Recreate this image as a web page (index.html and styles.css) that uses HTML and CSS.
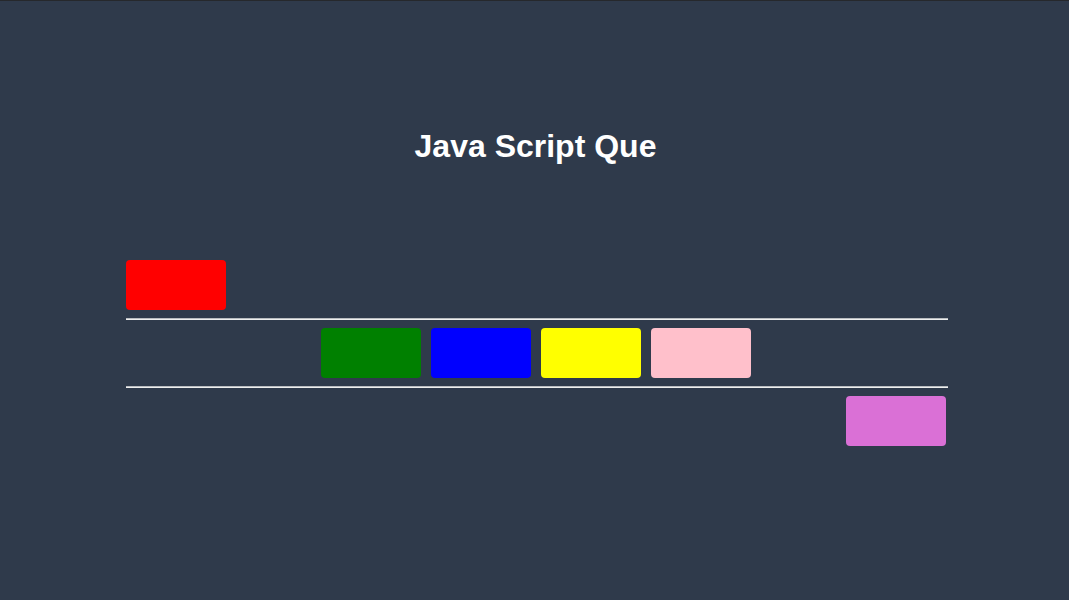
FILE: index.html
```html
<!DOCTYPE html>
<html>
<head>
<meta charset="utf-8">
<link rel="stylesheet" href="styles.css">
</head>
<body>
<div class="page">
  <h1 class="title">Java Script Que</h1>
  <div class="queue">
    <div class="row row-start">
      <div class="box red"></div>
    </div>
    <div class="rule"></div>
    <div class="row row-center">
      <div class="box green"></div>
      <div class="box blue"></div>
      <div class="box yellow"></div>
      <div class="box pink"></div>
    </div>
    <div class="rule"></div>
    <div class="row row-end">
      <div class="box orchid"></div>
    </div>
  </div>
</div>
</body>
</html>
```

FILE: styles.css
```css
html, body {
  margin: 0;
  padding: 0;
  height: 100%;
}
body {
  background: #2f3a4b;
  border-top: 1px solid #26282c;
  box-sizing: border-box;
  font-family: "Liberation Sans", Arial, sans-serif;
}
.page {
  padding-top: 127px;
}
.title {
  margin: 0;
  text-align: center;
  color: #ffffff;
  font-size: 32px;
  font-weight: bold;
  line-height: 36px;
  padding-left: 2px;
}
.queue {
  margin: 96px 121px 0 126px;
  display: flex;
  flex-direction: column;
}
.row {
  display: flex;
  gap: 10px;
}
.row-start { justify-content: flex-start; margin-bottom: 8px; }
.row-center { justify-content: center; margin: 8px 0; padding-right: 2px; }
.row-end { justify-content: flex-end; margin-top: 8px; padding-right: 2px; }
.rule {
  height: 1px;
  background: #b9bcc0;
  border-bottom: 1px solid #eeeeee;
}
.box {
  width: 100px;
  height: 50px;
  border-radius: 4px;
}
.red { background: #ff0000; }
.green { background: #008000; }
.blue { background: #0000ff; }
.yellow { background: #ffff00; }
.pink { background: #ffc0cb; }
.orchid { background: #da70d6; }
```
